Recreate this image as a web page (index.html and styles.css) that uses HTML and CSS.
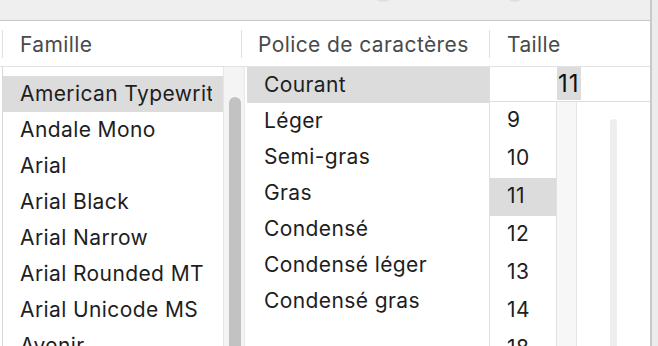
FILE: index.html
```html
<!DOCTYPE html>
<html lang="fr">
<head>
<meta charset="utf-8">
<title>Polices</title>
<link rel="stylesheet" href="styles.css">
</head>
<body>
<div class="window">
  <div class="main">
    <div class="toolbar">
      <span class="ghost g1"></span>
      <span class="ghost g2"></span>
    </div>
    <div class="headers">
      <div class="h h-fam">Famille</div>
      <div class="h h-face">Police de caractères</div>
      <div class="h h-size">Taille</div>
    </div>
    <div class="lists">
      <div class="col-fam">
        <div class="list fam-list">
          <div class="row sel"><span class="t">American Typewriter</span></div>
          <div class="row"><span class="t">Andale Mono</span></div>
          <div class="row"><span class="t">Arial</span></div>
          <div class="row"><span class="t">Arial Black</span></div>
          <div class="row"><span class="t">Arial Narrow</span></div>
          <div class="row"><span class="t">Arial Rounded MT</span></div>
          <div class="row"><span class="t">Arial Unicode MS</span></div>
          <div class="row"><span class="t">Avenir</span></div>
        </div>
        <div class="vscroll"><div class="thumb"></div></div>
      </div>
      <div class="list face-list">
        <div class="row sel"><span class="t">Courant</span></div>
        <div class="row"><span class="t">Léger</span></div>
        <div class="row"><span class="t">Semi-gras</span></div>
        <div class="row"><span class="t">Gras</span></div>
        <div class="row"><span class="t">Condensé</span></div>
        <div class="row"><span class="t">Condensé léger</span></div>
        <div class="row"><span class="t">Condensé gras</span></div>
      </div>
      <div class="col-size">
        <div class="size-input"><span class="selected-text">11</span></div>
        <div class="size-body">
          <div class="list size-list">
            <div class="srow"><span class="t">9</span></div>
            <div class="srow"><span class="t">10</span></div>
            <div class="srow sel"><span class="t">11</span></div>
            <div class="srow"><span class="t">12</span></div>
            <div class="srow"><span class="t">13</span></div>
            <div class="srow"><span class="t">14</span></div>
            <div class="srow"><span class="t">18</span></div>
          </div>
          <div class="size-track"></div>
          <div class="slider-area"><div class="slider"></div></div>
        </div>
      </div>
    </div>
  </div>
  <div class="edge"></div>
</div>
</body>
</html>
```
FILE: styles.css
```css
html, body {
  margin: 0;
  padding: 0;
  background: #ffffff;
}
body {
  width: 658px;
  height: 346px;
  overflow: hidden;
  font-family: "Inter", "Noto Sans", "Liberation Sans", sans-serif;
  color: #1e1e1e;
}
.window {
  display: flex;
  width: 658px;
  height: 346px;
}
.main {
  width: 650px;
  display: flex;
  flex-direction: column;
  overflow: hidden;
}
.edge {
  width: 6px;
  border-left: 2px solid #c9c9c9;
  background: #ececec;
}
.toolbar {
  position: relative;
  height: 20px;
  background: #efefef;
  border-bottom: 1px solid #c6c6c6;
  overflow: hidden;
}
.ghost {
  position: absolute;
  top: -22px;
  width: 24px;
  height: 24px;
  border-radius: 50%;
  background: #e0e0e0;
}
.g1 { left: 371px; }
.g2 { left: 503px; }

.headers {
  display: flex;
  height: 46px;
  padding: 9px 0 8px 2px;
  box-sizing: border-box;
  border-bottom: 1px solid #e2e2e2;
}
.h {
  height: 28px;
  display: flex;
  align-items: center;
  border-left: 1px solid #e0e0e0;
  font-size: 21px;
  letter-spacing: 0.4px;
  color: #4a4a4a;
  box-sizing: border-box;
}
.h-fam { width: 239px; padding-left: 17px; }
.h-face { width: 248px; padding-left: 16px; }
.h-size { flex: 1; padding-left: 17px; }

.lists {
  flex: 1;
  display: flex;
  min-height: 0;
}
.list {
  font-size: 21px;
  letter-spacing: 0.4px;
  color: #1e1e1e;
}
.row {
  height: 36px;
  display: flex;
  align-items: center;
  padding: 0 11px 2px 17px;
  box-sizing: border-box;
}
.row .t, .srow .t {
  display: block;
  overflow: hidden;
  white-space: nowrap;
}
.row.sel, .srow.sel {
  background: #dcdcdc;
}
.col-fam {
  display: flex;
  width: 247px;
}
.fam-list {
  width: 220px;
  margin-left: 2px;
  border-left: 1px solid #d9d9d9;
  padding-top: 9px;
}
.vscroll {
  width: 22px;
  border-left: 1px solid #e6e6e6;
  border-right: 1px solid #e9e9e9;
  background: #f4f4f4;
  padding: 30px 0 0 5px;
  box-sizing: border-box;
}
.thumb {
  width: 12px;
  height: 260px;
  border-radius: 6px;
  background: #c2c2c2;
}
.face-list {
  width: 242px;
}
.col-size {
  flex: 1;
  display: flex;
  flex-direction: column;
  border-left: 1px solid #e0e0e0;
}
.size-input {
  height: 34px;
  border-bottom: 1px solid #dedede;
  padding-left: 67px;
  display: flex;
}
.selected-text {
  background: #dcdcdc;
  height: 33px;
  display: flex;
  align-items: center;
  padding: 0 1px 0 1px;
  font-size: 24px;
  color: #111111;
  letter-spacing: 1px;
}
.size-body {
  flex: 1;
  display: flex;
  min-height: 0;
}
.size-list {
  width: 66px;
  border-right: 1px solid #e2e2e2;
}
.srow {
  height: 38px;
  display: flex;
  align-items: center;
  padding: 0 0 4px 17px;
  box-sizing: border-box;
}
.size-track {
  width: 19px;
  background: #f7f7f7;
  border-right: 1px solid #e6e6e6;
}
.slider-area {
  flex: 1;
  padding: 17px 0 0 33px;
}
.slider {
  width: 7px;
  height: 300px;
  border-radius: 4px;
  background: #eeeeee;
}
```
